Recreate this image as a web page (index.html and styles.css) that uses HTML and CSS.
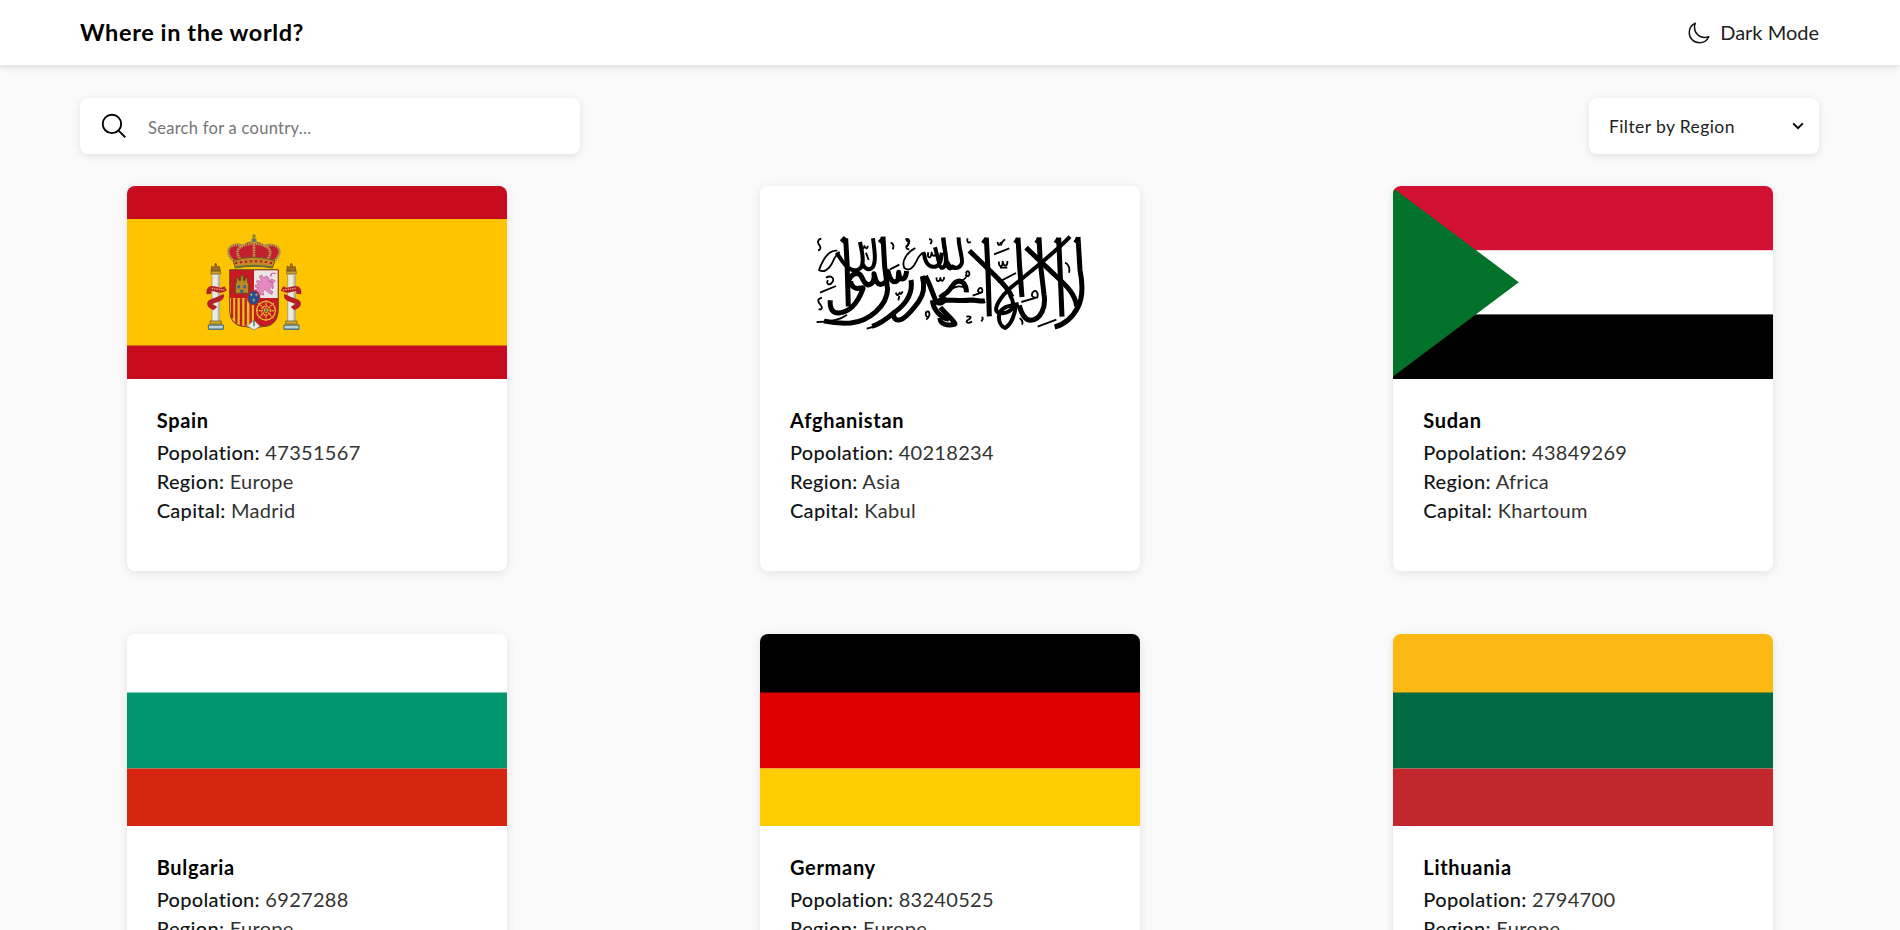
FILE: index.html
```html
<!DOCTYPE html>
<html lang="en">
<head>
<meta charset="utf-8">
<title>Where in the world?</title>
<link rel="stylesheet" href="styles.css">
</head>
<body>
<header class="header">
  <h1 class="brand">Where in the world?</h1>
  <button class="theme" type="button">
    <svg class="moon" viewBox="0 0 512 512"><path d="M160 136c0-30.62 4.51-61.61 16-88C99.57 81.27 48 159.32 48 248c0 119.29 96.71 216 216 216 88.68 0 166.73-51.57 200-128-26.39 11.49-57.38 16-88 16-119.29 0-216-96.71-216-216z"/></svg>
    <span class="theme-label">Dark Mode</span>
  </button>
</header>
<main>
  <div class="controls">
    <label class="search">
      <svg class="lens" viewBox="0 0 512 512"><path d="M221.09 64a157.09 157.09 0 10157.09 157.09A157.1 157.1 0 00221.09 64zM338.29 338.29L448 448"/></svg>
      <input class="search-input" type="text" placeholder="Search for a country...">
    </label>
    <div class="filter">
      <span class="filter-label">Filter by Region</span>
      <svg class="chevron" viewBox="0 0 12 8"><path d="M1.2 1.400 6 6.100l4.800-4.700"/></svg>
    </div>
  </div>
  <section class="grid">
    <article class="card">
      <svg class="flag" viewBox="0 0 380 192.500">
        <rect width="380" height="193" fill="#c60b1e"/>
        <rect y="33" width="380" height="126.500" fill="#ffc400"/>
        <g transform="translate(68 39) scale(.33333)">
          <g id="pillar">
            <path d="M48 137h28l-3-14-5 5-6-14-6 14-6-5z" fill="#a5681c" stroke="#5b4a18" stroke-width="2"/>
            <path d="M48 139h29v8H48z" fill="#d5a128" stroke="#5c563a" stroke-width="2"/>
            <path d="M51 148h23v142H51z" fill="#ece9df" stroke="#8c8b78" stroke-width="2"/>
            <path d="M68 149h5v140h-5z" fill="#b9b9aa"/>
            <path d="M45 288h34v9H45z" fill="#d9a82a" stroke="#5c563a" stroke-width="2"/>
            <path d="M40 300h45v13H40z" fill="#8fb0b8" stroke="#3b6776" stroke-width="3"/>
            <path d="M42 306h41" stroke="#eef3ee" stroke-width="3"/>
          </g>
          <use href="#pillar" x="227"/>
          <g fill="none" stroke="#b3202a" stroke-width="15">
            <path d="M42 207c-2-18 6-18 18-15 16 5 20 5 32-2M79 210c6 16-38 16-35 27 2 9 12 8 17 14"/>
            <path d="M311 207c2-18-6-18-18-15-16 5-20 5-32-2M275 210c-6 16 38 16 35 27-2 9-12 8-17 14"/>
          </g>
          <path d="M50 190l38 5M264 195l38-5" stroke="#e8b36c" stroke-width="4" stroke-dasharray="4 3"/>
          <path d="M104 134h146v119c0 30-14 48-38 51-15 1-26 3-35 10-9-7-20-9-35-10-24-3-38-21-38-51z" fill="#c51a24" stroke="#6d4a20" stroke-width="3"/>
          <path d="M177 136h71v83h-71z" fill="#ebe7e4"/>
          <path d="M105 219h72v84c-48 4-72-10-72-50z" fill="#f0b91c"/>
          <path d="M111 220v60M124 220v74M138 220v82M152 220v82M167 220v82" stroke="#b9232a" stroke-width="7"/>
          <path d="M121 205v-31h3v-15h7v7h6v-14h8v14h6v-7h7v15h3v31z" fill="#b98a26" stroke="#6a4a12" stroke-width="3"/>
          <path d="M127 181h8v9h-8zM145 181h8v9h-8zM136 194h9v11h-9z" fill="#3f6489"/>
          <path d="M193 154l8-4 4 8 10-5 8 7-5 8 13-6 10 6-5 5-9-1 4 12-8 10 10 5-2 9-13-6-9-10-5 9 3 9-12-1-2-12-10 5-3-7 12-7-10-1-2-7 13-2-10-8 6-4 11 6z" fill="#e58ac0" stroke="#b95f91" stroke-width="2"/>
          <path d="M229 155c-5-9 5-13 13-9M222 170c12-4 15 14 10 22" fill="none" stroke="#cf67a2" stroke-width="4"/>
          <g fill="none" stroke="#e1b32c" stroke-width="4"><circle cx="213" cy="257" r="28"/><circle cx="213" cy="257" r="14" stroke-dasharray="5 3"/><path d="M190 234l46 46M236 234l-46 46M213 226v62M183 257h60" stroke-dasharray="6 2"/></g>
          <circle cx="213" cy="257" r="4" fill="#3b8b50"/>
          <path d="M157 303l20-17 18 18-18 11z" fill="#e9e9e4" stroke="#928c7a" stroke-width="2"/>
          <path d="M177 284v20" stroke="#347a50" stroke-width="4"/>
          <ellipse cx="176" cy="218" rx="20" ry="23" fill="#bd2530"/>
          <ellipse cx="176" cy="218" rx="16" ry="19" fill="#1e4f92"/>
          <path d="M165 209h8M180 209h8M172 225h9M169 205v9M184 205v9M176 220v11" stroke="#a9a870" stroke-width="3"/>
          <path d="M111 104c-32-39 13-56 34-42 8-15 52-15 62 0 26-12 66 6 35 42z" fill="#c22030" stroke="#8a651b" stroke-width="3"/>
          <g fill="none" stroke="#b8984a" stroke-width="8" stroke-dasharray="5 2">
            <path d="M113 106C80 70 115 50 143 64M139 106c-23-25-12-47 36-51M177 52v53M214 106c23-25 12-47-36-51M241 106c33-36-3-56-34-42"/>
          </g>
          <path d="M114 107q63-20 126 0l-8 22q-55-10-111 0z" fill="#c48a25" stroke="#685a23" stroke-width="3"/>
          <path d="M120 115q56-13 114 0" fill="none" stroke="#b51c32" stroke-width="6" stroke-dasharray="7 8"/>
          <path d="M123 126q54-10 108 0" fill="none" stroke="#63733b" stroke-width="4"/>
          <circle cx="177" cy="46" r="8" fill="#5d7768" stroke="#d4a530" stroke-width="3"/>
          <path d="M177 28v14M172 33h10" stroke="#7b7740" stroke-width="4"/>
        </g>
      </svg>
      <div class="info"><h2 class="name">Spain</h2>
        <p class="row"><b class="key">Popolation:</b> <span class="val">47351567</span></p>
        <p class="row"><b class="key">Region:</b> <span class="val">Europe</span></p>
        <p class="row"><b class="key">Capital:</b> <span class="val">Madrid</span></p></div>
    </article>
    <article class="card">
      <svg class="flag" viewBox="0 0 380 192.500">
        <rect width="380" height="193" fill="#fff"/>
        <g class="ink" transform="translate(40 34) scale(.33333)">
          <path class="bold" d="M137 55l4 70 4 134M249 50l5 90 9 70M125 66l12-13M239 68l13-13"/>
          <path class="mid" d="M180 66l6 30c4 25 2 45-6 48M219 55c5 40 10 70-1 87-8 10-24 6-29-9-5 13-19 23-36 15-22-10-33-36-43-50"/>
          <path class="fine" d="M112 92c-22-3-41 20-55 58 14 10 30-3 38-18 6-14 12-28 24-36M64 56c-12 3-13 13-4 22 3 8 0 12-6 13"/>
          <path class="bold" d="M146 181c8-19 27-29 38-12 8 13 7 22 20 26 17-2 20-20 18-34 5 19 9 40 29 29 18-8 9-24 13-36 5 22 15 41 30 26l2-23c1 26 21 28 24-4"/>
          <path class="bold" d="M152 183c0 18 15 25 29 21 9-3 10 0 6 7-14 36-35 65-71 68-17 1-28-12-25-38"/>
          <path class="bold" d="M263 205c-1 54-58 99-111 104-43 2-61-2-80-6M333 180c7 45-17 73-47 95-26 22-48 39-70 44M367 168c9 34 4 57-12 78-17 23-40 53-58 54-15 1-19-13-14-26"/>
          <path class="fine" d="M50 306c30 0 67-3 91-22M200 326c22-4 52-20 70-38M78 173c19-10 27 5 17 16-8 8-18 2-11-8M60 218l48-20M66 233c-16 4-13 13-4 22 7 9 2 16-6 12M272 68c9 2 10 12 6 20M318 63c12-4 9 15-1 17M184 79c1 11 9 8 9-1 4 10 10 9 10-1M198 98l8 22"/>
          <path class="fine" d="M346 84c-24 13-43 38-33 60 16 12 28-3 36-20 8-18 16-26 26-27M316 58c14-4 14 8 8 16-8 8-6 14 4 14M287 218c6 14 10 4 12 0 3 6 6 3 9-4M298 228l-3 13M410 172c-2 17 10 14 11 2 2 13 12 10 11-3M383 292c-8-4-8-18 1-18 9 5 3 18-5 25M387 58c9-2 10 8 4 14M385 97c-5 20 8 21 10 0 3 16 12 13 13 0M270 148l28-14"/>
          <path class="mid" d="M372 98c2 28 14 46 33 42 17-3 19-24 20-42M405 82l12 45M430 53l12 85c6 10 14 10 20-3"/>
          <path class="bold" d="M376 168c12 20 19 45 30 71 5 11 15 15 26 4M397 241c3 30 26 52 50 57M411 249c10-12 21-16 30-6"/>
        </g>
        <g class="ink" transform="translate(180 34) scale(.33333)">
          <path class="mid" d="M10 53c-1 30 13 57 6 79-4 15-13 14-16 4M56 52c-1 31 15 67 9 79-8 18-34 18-43-5"/>
          <path class="bold" d="M139 53l5 101 4 135M234 53l5 88 7 90M297 52l4 77 11 94c7 38-10 76-40 78-18-1-28-21-34-45M356 53l4 92 6 145M414 51l6 99c8 41 11 79-6 111-18 35-44 53-70 60"/>
          <path class="mid" d="M128 69l12-14M225 69l10-14M288 69l10-14M346 69l10-14M405 68l10-14"/>
          <path class="bold" d="M88 92l76 74c26 25 44 47 52 65M258 83l76 72c39 37 71 62 76 104"/>
          <path class="mid" d="M390 50C354 89 286 143 236 184c-34 24-61 55-67 78-4 18 13 20 31 15 26-8 22-34 10-51"/>
          <path class="mid" d="M236 252c-21 4-56 6-59 36-1 15 5 31 18 36 19-10 30-41 32-65"/>
          <path class="bold" d="M0 242c26-5 61 3 93-2 24 1 28 6 42 2M79 217c1-22-13-42-33-30-7 4-14 22-26 31-7 6-14 9-20 15M1 262c28 32 42 41 44 50-22 7-45 1-45-18"/>
          <path class="fine" d="M34 207c16-8 29-12 43-1M76 165c7 7 14 2 12-5-1-10-11-7-9 1 4 11-8 19-14 20M98 227l28-10c4-9-2-16-8-12-10 11 1 15 9 11M79 290c13-2 17 2 8 8-14 6-6 15 9 7M125 291c6 2 3 8-1 13"/>
          <path class="fine" d="M173 66c1 14 9 9 9 0M183 76c2-14 8-14 12-18M162 103l46-18M177 125c-2 19 12 17 11 0 5 18 15 14 14-2M180 143h22M174 187l54-28M244 246l48-14c3-10-1-21-9-19-11 6-9 22 4 19M239 294c8 6 10 14 7 20M293 320l56-21M375 128c9 3 16 16 12 30M83 55c-4 10 3 16 9 10"/>
        </g>
      </svg>
      <div class="info"><h2 class="name">Afghanistan</h2>
        <p class="row"><b class="key">Popolation:</b> <span class="val">40218234</span></p>
        <p class="row"><b class="key">Region:</b> <span class="val">Asia</span></p>
        <p class="row"><b class="key">Capital:</b> <span class="val">Kabul</span></p></div>
    </article>
    <article class="card">
      <svg class="flag" viewBox="0 0 380 192.500">
        <rect width="380" height="65" fill="#d21034"/>
        <rect y="64.200" width="380" height="64.500" fill="#fff"/>
        <rect y="128.400" width="380" height="65" fill="#000"/>
        <path d="M-2.500 0 125.800 96.250-2.500 192.500z" fill="#007229"/>
      </svg>
      <div class="info"><h2 class="name">Sudan</h2>
        <p class="row"><b class="key">Popolation:</b> <span class="val">43849269</span></p>
        <p class="row"><b class="key">Region:</b> <span class="val">Africa</span></p>
        <p class="row"><b class="key">Capital:</b> <span class="val">Khartoum</span></p></div>
    </article>
    <article class="card">
      <svg class="flag" viewBox="0 0 380 192.500">
        <rect width="380" height="59" fill="#fff"/>
        <rect y="58.500" width="380" height="76" fill="#00966e"/>
        <rect y="134.500" width="380" height="59" fill="#d62612"/>
      </svg>
      <div class="info"><h2 class="name">Bulgaria</h2>
        <p class="row"><b class="key">Popolation:</b> <span class="val">6927288</span></p>
        <p class="row"><b class="key">Region:</b> <span class="val">Europe</span></p></div>
    </article>
    <article class="card">
      <svg class="flag" viewBox="0 0 380 192.500">
        <rect width="380" height="59" fill="#000"/>
        <rect y="58.500" width="380" height="76" fill="#d00"/>
        <rect y="134.500" width="380" height="59" fill="#ffce00"/>
      </svg>
      <div class="info"><h2 class="name">Germany</h2>
        <p class="row"><b class="key">Popolation:</b> <span class="val">83240525</span></p>
        <p class="row"><b class="key">Region:</b> <span class="val">Europe</span></p></div>
    </article>
    <article class="card">
      <svg class="flag" viewBox="0 0 380 192.500">
        <rect width="380" height="59" fill="#fdb913"/>
        <rect y="58.500" width="380" height="76" fill="#006a44"/>
        <rect y="134.500" width="380" height="59" fill="#c1272d"/>
      </svg>
      <div class="info"><h2 class="name">Lithuania</h2>
        <p class="row"><b class="key">Popolation:</b> <span class="val">2794700</span></p>
        <p class="row"><b class="key">Region:</b> <span class="val">Europe</span></p></div>
    </article>
  </section>
</main>
</body>
</html>
```
FILE: styles.css
```css
* { box-sizing: border-box; margin: 0; padding: 0; }
html { height: 100%; overflow: hidden; }
body {
  height: 100%;
  overflow: hidden;
  background: #fafafa;
  color: #111517;
  font-family: Lato, "Open Sans", sans-serif;
  font-size: 20px;
  font-variant-ligatures: none;
}
.header {
  display: flex;
  align-items: center;
  justify-content: space-between;
  height: 65px;
  padding: 0 81px 0 80px;
  background: #fff;
  box-shadow: 0 2px 4px rgba(0, 0, 0, .08), 0 2px 12px rgba(0, 0, 0, .06);
}
.brand { font-size: 23.500px; font-weight: 700; line-height: 30px; padding-bottom: 2px; color: #000; letter-spacing: .6px; }
.theme { display: flex; align-items: center; gap: 9px; border: 0; background: none; font: inherit; color: #111517; }
.theme-label { font-size: 20px; line-height: 28px; padding-bottom: 2px; color: #222; }
.moon { width: 24px; height: 24px; fill: none; stroke: #111517; stroke-width: 32; stroke-linejoin: round; }
.controls { display: flex; justify-content: space-between; padding: 33px 81px 0 80px; }
.search, .filter {
  display: flex;
  align-items: center;
  height: 56px;
  border-radius: 8px;
  background: #fff;
  box-shadow: 0 2px 9px rgba(0, 0, 0, .1);
}
.search { width: 500px; padding-left: 19px; gap: 19px; }
.lens { width: 30px; height: 30px; fill: none; stroke: #000; stroke-width: 32; stroke-miterlimit: 10; }
.search-input { width: 400px; border: 0; outline: 0; background: none; font-family: inherit; font-size: 16.500px; letter-spacing: .28px; padding-top: 3px; color: #111517; }
.search-input::placeholder { color: #757575; }
.filter { width: 230px; justify-content: space-between; padding: 0 15px 0 20px; }
.filter-label { font-size: 17.500px; line-height: 24px; letter-spacing: .4px; padding-top: 1px; color: #222; }
.chevron { width: 12px; height: 8px; fill: none; stroke: #000; stroke-width: 2; }
.grid { display: grid; grid-template-columns: repeat(3, 1fr); justify-items: center; row-gap: 62.500px; padding-top: 32px; }
.card {
  width: 380px;
  height: 385px;
  border-radius: 8px;
  background: #fff;
  overflow: hidden;
  box-shadow: 0 2px 10px rgba(0, 0, 0, .1);
}
.flag { display: block; width: 380px; height: 192.500px; }
.ink { fill: none; stroke: #000; stroke-linecap: butt; stroke-linejoin: round; }
.fine { stroke-width: 5.500; }
.mid { stroke-width: 12; }
.bold { stroke-width: 15; }
.info { padding: 27px 30px; }
.name { font-size: 20px; font-weight: 700; line-height: 28px; margin-bottom: 4px; color: #000; letter-spacing: .7px; }
.row { line-height: 29.200px; font-size: 20px; white-space: nowrap; letter-spacing: .3px; }
.key { font-weight: 500; }
.val { font-weight: 400; color: #333; }
```
